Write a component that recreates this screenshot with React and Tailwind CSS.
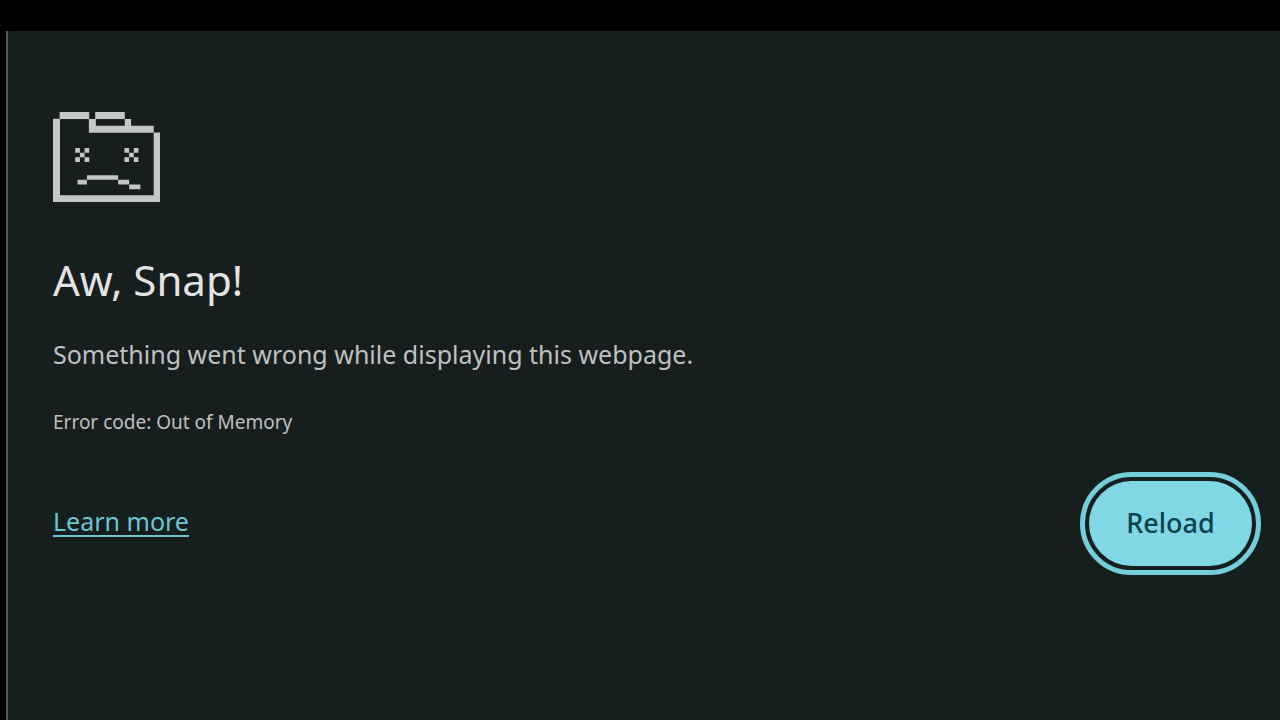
const SadFolder = () => (
  <svg
    viewBox="0 0 322 268"
    className="w-[107px] h-[90px]"
    fill="#c4c7c7"
    preserveAspectRatio="none"
    aria-hidden="true"
  >
    {/* folder outline */}
    <path d="M0 20H21V248H303V61H322V268H0Z" />
    <path d="M20 0H109V21H20Z" />
    <path d="M127 0H216V21H235V41H303V62H108V21H127ZM129 21V41H216V21Z" fillRule="evenodd" />
    {/* eyes */}
    <path d="M67 107h14v14h-14zM95 107h14v14h-14zM81 121h14v14h-14zM67 135h14v14h-14zM95 135h14v14h-14z" />
    <path d="M215 107h14v14h-14zM243 107h14v14h-14zM229 121h14v14h-14zM215 135h14v14h-14zM243 135h14v14h-14z" />
    {/* mouth */}
    <path d="M102 188H196V202H229V216H263V230H229V216H196V202H102V216H74V202H102Z" />
  </svg>
);

export default function App() {
  return (
    <div className="min-h-screen bg-black pt-[31px] pl-1.5 flex font-['Noto_Sans',sans-serif]">
      <main className="flex-1 bg-[#171e1e] border-l-2 border-[#525757] pt-[81px] pl-[45px] pr-7">
        <SadFolder />

        <h1 className="mt-12 text-[42px] leading-[60px] text-[#e3e3e3]">Aw, Snap!</h1>
        <p className="mt-6 text-[25px] leading-10 text-[#bec1c1]">
          Something went wrong while displaying this webpage.
        </p>
        <p className="mt-8 text-[19px] leading-8 text-[#bec1c1]">Error code: Out of Memory</p>

        <div className="mt-[43px] flex items-center justify-between">
          <a
            href="#learn-more"
            className="pb-1.5 text-[25px] leading-10 text-[#6fc5d4] underline underline-offset-4 decoration-2"
          >
            Learn more
          </a>
          <button
            type="button"
            onClick={() => window.location.reload()}
            className="w-[163px] h-[85px] rounded-full bg-[#80d7e6] text-[27px] font-medium text-[#08434c] outline-[5px] outline-offset-4 outline-[#73cddb]"
          >
            Reload
          </button>
        </div>
      </main>
    </div>
  );
}
